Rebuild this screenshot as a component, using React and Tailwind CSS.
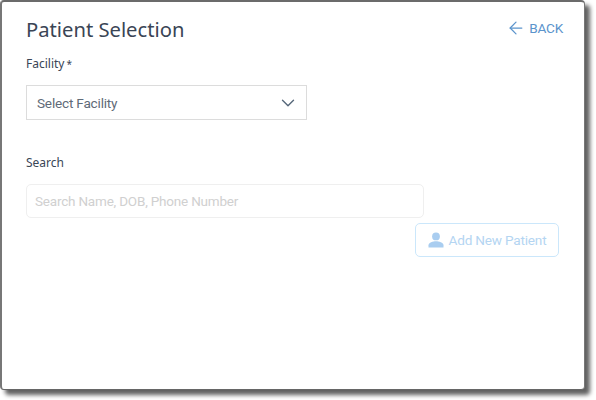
import { ArrowLeft, ChevronDown } from "lucide-react";

const UserIcon = () => (
  <svg viewBox="0 0 16 16" className="w-[16px] h-[16px] shrink-0 fill-[#a9cdf0]">
    <circle cx="8" cy="4.4" r="3.9" />
    <path d="M0.5 15.5v-2.2c0-2.6 4.6-4 7.5-4s7.5 1.4 7.5 4v2.2z" />
  </svg>
);

export default function App() {
  return (
    <div className="w-[596px] h-[400px] bg-white overflow-hidden font-['Roboto',sans-serif]">
      <div className="w-[585px] h-[390px] bg-white border-t-2 border-l-2 border-r border-b border-t-[#6b6b6b] border-l-[#777] border-r-[#777] border-b-[#666] rounded-[4px] shadow-[5px_5px_4px_rgba(0,0,0,0.62)] pl-[24px] pr-[21px] pt-[12px]">
        <div className="flex items-start justify-between h-[30px]">
          <h1 className="text-[20.2px] leading-[30px] text-[#3a4555] font-['Noto_Sans',sans-serif]">Patient Selection</h1>
          <div className="flex items-center gap-[3px] text-[#5b94cc] text-[13.6px] tracking-[-0.2px] leading-[28px]">
            <ArrowLeft className="w-[20px] h-[20px]" strokeWidth={1.5} />
            <span>BACK</span>
          </div>
        </div>
        <label className="block mt-[11px] text-[12px] leading-[18px] text-[#3a4656] font-['Noto_Sans',sans-serif]">
          Facility<span className="ml-[2px] text-[10px]">*</span>
        </label>
        <div className="mt-[12px] w-[281px] h-[35px] border border-[#dcdcdc] flex items-center justify-between pl-[10px] pr-[7px] text-[13.6px] tracking-[-0.2px] text-[#5f6b78]">
          <span className="pt-[1px]">Select Facility</span>
          <ChevronDown className="w-[22px] h-[22px] text-[#56677a]" strokeWidth={1.5} />
        </div>
        <label className="block mt-[34px] text-[12px] leading-[18px] text-[#3a4656] font-['Noto_Sans',sans-serif]">Search</label>
        <div className="mt-[12px] w-[398px] h-[34px] border border-[#efefef] rounded-[5px] flex items-center pl-[8px] text-[13.5px] tracking-[-0.2px] text-[#d0d0d0]">
          Search Name, DOB, Phone Number
        </div>
        <div className="mt-[5px] w-[534px] flex justify-end">
          <button className="w-[144px] mr-[1px] h-[34px] border border-[#cbe7fb] rounded-[5px] flex items-center justify-center gap-[5px] text-[13.6px] tracking-[-0.2px] text-[#b4d5f2]">
            <UserIcon />
            <span>Add New Patient</span>
          </button>
        </div>
      </div>
    </div>
  );
}
